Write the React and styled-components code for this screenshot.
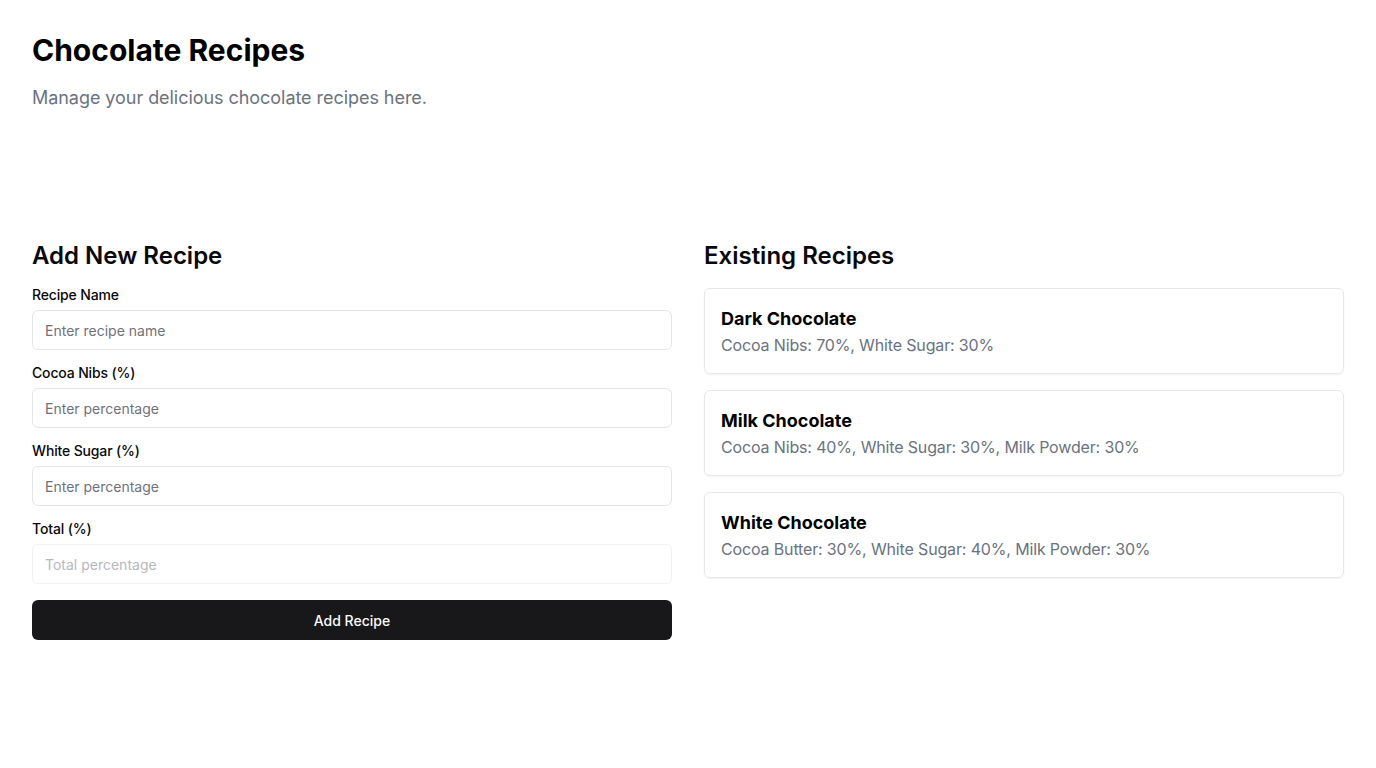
import React from 'react';
import styled, { createGlobalStyle } from 'styled-components';

const recipes = [
  { name: 'Dark Chocolate', parts: 'Cocoa Nibs: 70%, White Sugar: 30%' },
  { name: 'Milk Chocolate', parts: 'Cocoa Nibs: 40%, White Sugar: 30%, Milk Powder: 30%' },
  { name: 'White Chocolate', parts: 'Cocoa Butter: 30%, White Sugar: 40%, Milk Powder: 30%' },
];

const fields = [
  { label: 'Recipe Name', placeholder: 'Enter recipe name' },
  { label: 'Cocoa Nibs (%)', placeholder: 'Enter percentage' },
  { label: 'White Sugar (%)', placeholder: 'Enter percentage' },
  { label: 'Total (%)', placeholder: 'Total percentage', disabled: true },
];

const App = () => {
  return (
    <>
      <GlobalStyle />
      <Page>
        <Title>Chocolate Recipes</Title>
        <Subtitle>Manage your delicious chocolate recipes here.</Subtitle>
        <Columns>
          <section>
            <SectionTitle>Add New Recipe</SectionTitle>
            <Form onSubmit={(e) => e.preventDefault()}>
              {fields.map((f) => (
                <Field key={f.label}>
                  <Label>{f.label}</Label>
                  <Input placeholder={f.placeholder} disabled={f.disabled} />
                </Field>
              ))}
              <Button type='submit'>Add Recipe</Button>
            </Form>
          </section>
          <section>
            <SectionTitle>Existing Recipes</SectionTitle>
            <List>
              {recipes.map((r) => (
                <Card key={r.name}>
                  <CardTitle>{r.name}</CardTitle>
                  <CardText>{r.parts}</CardText>
                </Card>
              ))}
            </List>
          </section>
        </Columns>
      </Page>
    </>
  );
};

const GlobalStyle = createGlobalStyle`
  * { box-sizing: border-box; }
  body {
    margin: 0;
    background: #fff;
    font-family: Inter, "Noto Sans", sans-serif;
    color: #09090b;
  }
`;

const Page = styled.div`
  padding: 32px;
`;

const Title = styled.h1`
  margin: 0 0 16px;
  font-size: 30px;
  line-height: 36px;
  font-weight: 700;
  color: #000;
`;

const Subtitle = styled.p`
  margin: 0 0 128px;
  font-size: 18px;
  line-height: 28px;
  color: #6b7280;
  letter-spacing: -0.05px;
`;

const Columns = styled.div`
  display: grid;
  grid-template-columns: 1fr 1fr;
  gap: 32px;
`;

const SectionTitle = styled.h2`
  margin: 0 0 16px;
  font-size: 24px;
  line-height: 32px;
  font-weight: 600;
`;

const Form = styled.form`
  display: flex;
  flex-direction: column;
  gap: 16px;
`;

const Field = styled.div`
  display: flex;
  flex-direction: column;
  gap: 8px;
`;

const Label = styled.label`
  font-size: 14px;
  line-height: 14px;
  font-weight: 500;
  letter-spacing: -0.15px;
`;

const Input = styled.input`
  height: 40px;
  padding: 0 12px;
  border: 1px solid #e4e4e7;
  border-radius: 6px;
  font-family: inherit;
  font-size: 14px;
  color: #09090b;
  background: #fff;
  &::placeholder {
    color: #71717a;
  }
  &:disabled {
    opacity: 0.5;
  }
`;

const Button = styled.button`
  height: 40px;
  border: none;
  border-radius: 6px;
  background: #18181b;
  color: #fafafa;
  font-family: inherit;
  font-size: 14px;
  font-weight: 500;
`;

const List = styled.div`
  display: flex;
  flex-direction: column;
  gap: 16px;
`;

const Card = styled.div`
  padding: 16px;
  border: 1px solid #e5e7eb;
  border-radius: 6px;
  box-shadow: 0 1px 2px rgba(0, 0, 0, 0.05);
`;

const CardTitle = styled.h3`
  margin: 0;
  font-size: 18px;
  line-height: 28px;
  font-weight: 700;
  color: #000;
`;

const CardText = styled.p`
  margin: 0;
  font-size: 16px;
  line-height: 24px;
  color: #6b7280;
  letter-spacing: -0.15px;
`;

export default App;
